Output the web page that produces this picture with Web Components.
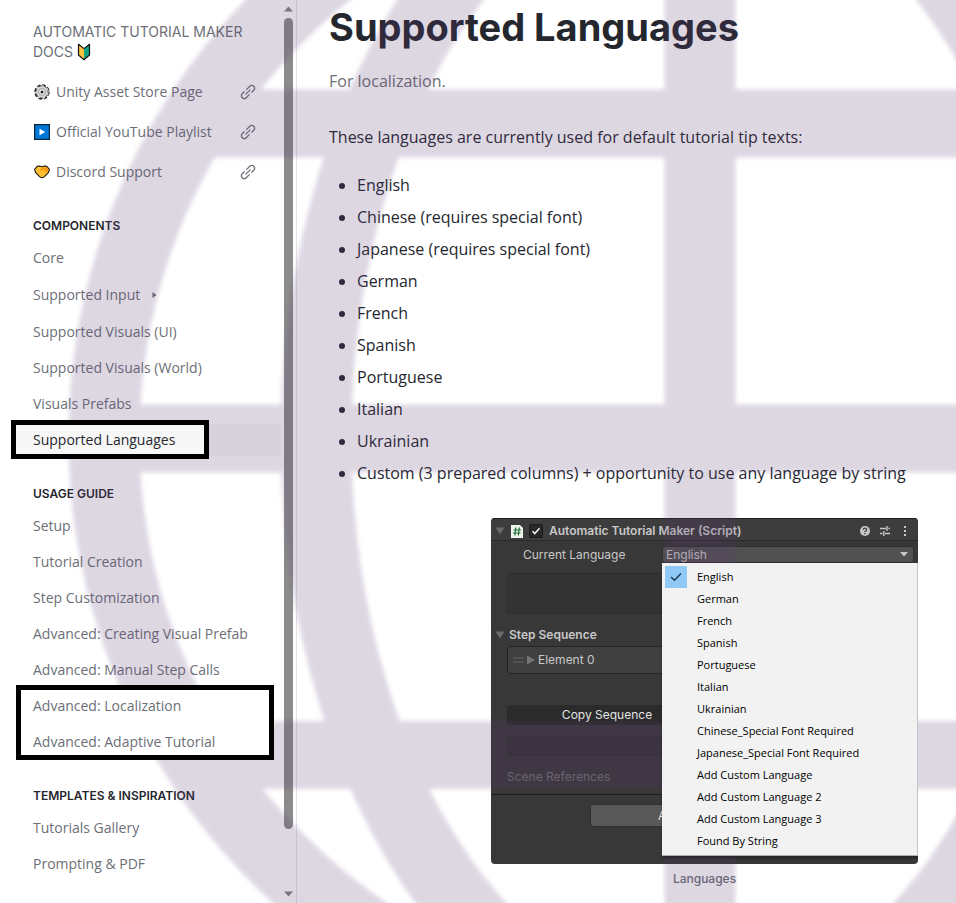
<!DOCTYPE html>
<html lang="en">
<head>
  <meta charset="utf-8">
  <meta name="viewport" content="width=device-width, initial-scale=1">
  <title>Supported Languages</title>
  <style>
    body {
      margin: 0;
      background: #fff;
      color: #25272e;
      font-family: "Open Sans", "Noto Sans", sans-serif;
    }
  </style>
</head>
<body>
  <docs-app>
    <docs-sidebar slot="sidebar">
      <nav-link icon="gear" href="#unity">Unity Asset Store Page</nav-link>
      <nav-link icon="play" href="#youtube">Official YouTube Playlist</nav-link>
      <nav-link icon="hands" href="#discord">Discord Support</nav-link>

      <nav-section heading="COMPONENTS">
        <nav-item>Core</nav-item>
        <nav-item expandable>Supported Input</nav-item>
        <nav-item>Supported Visuals (UI)</nav-item>
        <nav-item>Supported Visuals (World)</nav-item>
        <nav-item>Visuals Prefabs</nav-item>
        <highlight-frame class="current">
          <nav-item active>Supported Languages</nav-item>
        </highlight-frame>
      </nav-section>

      <nav-section heading="USAGE GUIDE">
        <nav-item>Setup</nav-item>
        <nav-item>Tutorial Creation</nav-item>
        <nav-item>Step Customization</nav-item>
        <nav-item>Advanced: Creating Visual Prefab</nav-item>
        <nav-item>Advanced: Manual Step Calls</nav-item>
        <highlight-frame>
          <nav-item>Advanced: Localization</nav-item>
          <nav-item>Advanced: Adaptive Tutorial</nav-item>
        </highlight-frame>
      </nav-section>

      <nav-section heading="TEMPLATES &amp; INSPIRATION">
        <nav-item>Tutorials Gallery</nav-item>
        <nav-item>Prompting &amp; PDF</nav-item>
      </nav-section>
    </docs-sidebar>

    <docs-article heading="Supported Languages" summary="For localization.">
      <p>These languages are currently used for default tutorial tip texts:</p>
      <ul>
        <li>English</li>
        <li>Chinese (requires special font)</li>
        <li>Japanese (requires special font)</li>
        <li>German</li>
        <li>French</li>
        <li>Spanish</li>
        <li>Portuguese</li>
        <li>Italian</li>
        <li>Ukrainian</li>
        <li>Custom (3 prepared columns) + opportunity to use any language by string</li>
      </ul>
      <figure>
        <inspector-panel></inspector-panel>
        <figcaption>Languages</figcaption>
      </figure>
    </docs-article>
  </docs-app>

<script>
const ICONS = {
  gear: `
    <svg width="16" height="16" viewBox="0 0 16 16">
      <circle cx="8" cy="8" r="6.8" fill="none" stroke="#1c1c1c" stroke-width="1.800" stroke-dasharray="3.560 1.780"/>
      <circle cx="8" cy="8" r="6.2" fill="#d6d6d6" stroke="#333" stroke-width=".9"/>
      <circle cx="8" cy="8" r="6" fill="none" stroke="#d6d6d6" stroke-width="1.600" stroke-dasharray="2 3.340" stroke-dashoffset="-.7"/>
      <circle cx="8" cy="8" r="3.400" fill="#f4f4f4" stroke="#999" stroke-width="1"/>
      <circle cx="8" cy="8" r="1.500" fill="#222"/>
    </svg>`,
  play: `
    <svg width="16" height="16" viewBox="0 0 16 16">
      <rect x=".6" y=".6" width="14.8" height="14.8" fill="#0078d7" stroke="#0b2138" stroke-width="1.2"/>
      <path d="M5.500 4.800v6.400L11.300 8z" fill="#fff"/>
    </svg>`,
  hands: `
    <svg width="16" height="16" viewBox="0 0 16 16">
      <path d="M3.200 2.300 5.500 2 8 2.800 10.500 2l2.300.3L15.400 5.300 14.500 8.400 10.500 12.600Q8 14.600 5.500 12.600L1.500 8.400.6 5.300z" fill="#ffbf35" stroke="#1c1608" stroke-width="1.100" stroke-linejoin="round"/>
      <path d="M7.500 3.800 6 6.300l1.500.7 2-1 3.500 2.500 1-2.500-1.500-2.800z" fill="#f59a0c"/>
    </svg>`,
  sprout: `
    <svg width="14" height="18" viewBox="0 0 14 18">
      <path d="M1.500 1.300 7 5.600v11L1.500 12z" fill="#fcc43e"/>
      <path d="M12.500 1.300 7 5.600v11l5.500-4.600z" fill="#10a482"/>
      <path d="M1.500 1.300 7 5.600l5.500-4.300V12L7 16.700 1.500 12z" fill="none" stroke="#111" stroke-width="1.200" stroke-linejoin="round"/>
    </svg>`,
  link: `
    <svg width="16" height="16" viewBox="0 0 16 16" fill="none" stroke="#6c6f77" stroke-width="1.200" stroke-linecap="round">
      <g transform="rotate(-45 8 8)">
        <path d="M7 10.800H2.700a2.800 2.800 0 0 1 0-5.600H5.500"/>
        <path d="M9 5.200h4.300a2.800 2.800 0 0 1 0 5.600H10.500"/>
        <path d="M5 8h6"/>
      </g>
    </svg>`
};

class BaseElement extends HTMLElement {
  constructor() {
    super();
    const tmpl = document.createElement('template');
    tmpl.innerHTML = this.render();
    this.attachShadow({ mode: 'open' }).appendChild(tmpl.content.cloneNode(true));
  }
}

class DocsApp extends BaseElement {
  render() {
    return `
    <style>
      :host {
        display: flex;
        position: relative;
        min-height: 100vh;
        overflow: hidden;
      }
      main { flex: 1; min-width: 0; }
    </style>
    <slot name="sidebar"></slot>
    <main><slot></slot></main>
    <globe-watermark></globe-watermark>`;
  }
}

// Translucent globe that lies over the whole page
class GlobeWatermark extends BaseElement {
  render() {
    return `
    <style>
      :host {
        position: absolute;
        inset: 0;
        z-index: 1;
        pointer-events: none;
      }
      svg { display: block; width: 100%; height: 100%; }
      g { opacity: .2; filter: blur(2px); }
    </style>
    <svg aria-hidden="true">
      <g fill="none" stroke="#5c3c75" stroke-width="71">
        <circle cx="700" cy="438" r="596"/>
        <ellipse cx="700" cy="438" rx="384" ry="596"/>
        <path d="M700-158V1034"/>
        <path d="M104 438.500H1296M194 123.500H1206M194 755H1206" stroke-width="68"/>
      </g>
    </svg>`;
  }
}

class DocsSidebar extends BaseElement {
  render() {
    return `
    <style>
      :host {
        display: flex;
        flex: none;
        box-sizing: border-box;
        width: 297px;
        height: 100vh;
        border-right: 1px solid #e3e3e6;
      }
      nav {
        flex: 1;
        display: flex;
        flex-direction: column;
        gap: 30px;
        padding: 22px 0 0 21px;
        box-sizing: border-box;
      }
      .title {
        margin: 0 12px -16px;
        font: 14px/20px Inter, sans-serif;
        color: #6c6f77;
      }
      .title svg { vertical-align: -4px; }
      ::slotted(nav-link:not(:last-of-type)) { margin-bottom: -22px; }
    </style>
    <nav>
      <div class="title">AUTOMATIC TUTORIAL MAKER DOCS ${ICONS.sprout}</div>
      <slot></slot>
    </nav>
    <docs-scrollbar></docs-scrollbar>`;
  }
}

class DocsScrollbar extends BaseElement {
  render() {
    return `
    <style>
      :host {
        display: flex;
        flex-direction: column;
        align-items: center;
        width: 15px;
        gap: 6px;
        padding: 6px 0;
        box-sizing: border-box;
      }
      svg { display: block; flex: none; }
      .track { flex: 1; }
      .thumb {
        width: 9px;
        height: 93.5%;
        border-radius: 5px;
        background: #8b8b8b;
      }
    </style>
    <svg width="9" height="6" viewBox="0 0 9 6"><path d="M0 5.500 4.500.5 9 5.500z" fill="#858585"/></svg>
    <div class="track"><div class="thumb"></div></div>
    <svg width="9" height="6" viewBox="0 0 9 6"><path d="M0 .5 4.500 5.500 9 .5z" fill="#858585"/></svg>`;
  }
}

class NavLink extends BaseElement {
  render() {
    return `
    <style>
      :host { display: block; }
      a {
        display: flex;
        align-items: center;
        gap: 6px;
        height: 32px;
        padding: 0 25px 0 13px;
        font-size: 14px;
        line-height: 20px;
        color: #6c6f77;
        text-decoration: none;
      }
      .text { flex: 1; white-space: nowrap; }
      svg { display: block; flex: none; }
    </style>
    <a href="${this.getAttribute('href')}">
      ${ICONS[this.getAttribute('icon')]}
      <span class="text"><slot></slot></span>
      ${ICONS.link}
    </a>`;
  }
}

class NavSection extends BaseElement {
  render() {
    return `
    <style>
      :host { display: block; }
      h2 {
        margin: 0 12px 8px;
        font: 600 12px/16px Inter, sans-serif;
      }
      .items {
        display: flex;
        flex-direction: column;
        gap: 4px;
      }
    </style>
    <h2>${this.getAttribute('heading')}</h2>
    <div class="items"><slot></slot></div>`;
  }
}

class NavItem extends BaseElement {
  render() {
    const arrow = this.hasAttribute('expandable')
      ? '<svg width="5" height="8" viewBox="0 0 5 8"><path d="M.5 1 4.500 4 .5 7z" fill="#6c6f77"/></svg>'
      : '';
    return `
    <style>
      :host { display: block; }
      :host([active]) { background: #f7f7f7; }
      a {
        display: flex;
        align-items: center;
        gap: 12px;
        position: relative;
        z-index: var(--item-layer, auto);
        height: 32px;
        padding: 0 12px;
        font-size: 14px;
        line-height: 20px;
        white-space: nowrap;
        color: #6c6f77;
        text-decoration: none;
      }
      :host([active]) a { color: #25272e; }
      :host([expandable]) a { height: 34px; }
    </style>
    <a href="#"><slot></slot>${arrow}</a>`;
  }
}

// Thick black frame around one or more nav items
class HighlightFrame extends BaseElement {
  render() {
    return `
    <style>
      :host {
        --item-layer: 3;
        display: flex;
        flex-direction: column;
        gap: 4px;
        position: relative;
      }
      .frame {
        position: absolute;
        z-index: 2;
        inset: -5px 7px -2px -5px;
        border: 5px solid #000;
        background: #fff;
      }
      :host(.current) .frame {
        inset: -4px 72px -3px -10px;
        background: #f7f7f7;
      }
    </style>
    <div class="frame"></div>
    <slot></slot>`;
  }
}

class DocsArticle extends BaseElement {
  render() {
    return `
    <style>
      :host {
        display: flex;
        flex-direction: column;
        padding: 3px 38px 16px 32px;
        font-size: 16px;
        line-height: 24px;
      }
      h1 {
        margin: 0 0 18px;
        font: 700 38px/48px Inter, sans-serif;
      }
      .summary { margin: 0 0 32px; color: #6c6f77; }
      ::slotted(p) { margin: 0 0 24px; }
      ::slotted(ul) {
        display: flex;
        flex-direction: column;
        gap: 8px;
        margin: 0 0 33px;
        padding-left: 28px;
      }
      ::slotted(figure) {
        align-self: flex-end;
        width: 427px;
        max-width: 100%;
        margin: 0;
        font: 500 12px/16px Inter, sans-serif;
        text-align: center;
        color: #6c6f77;
      }
    </style>
    <h1>${this.getAttribute('heading')}</h1>
    <p class="summary">${this.getAttribute('summary')}</p>
    <slot></slot>`;
  }
}

class InspectorPanel extends BaseElement {
  render() {
    return `
    <style>
      :host {
        display: block;
        margin-bottom: 7px;
        border-radius: 4px;
        overflow: hidden;
        background: #383838;
        color: #c8c8c8;
        font: 12px/16px Inter, sans-serif;
        text-align: left;
      }
      svg { display: block; flex: none; }
      header {
        display: flex;
        align-items: center;
        gap: 5px;
        height: 23px;
        box-sizing: border-box;
        padding: 2px 7px 0 4px;
        border-top: 1px solid #1e1e1e;
        border-bottom: 1px solid #2a2a2a;
        background: #3d3d3d;
      }
      header label {
        display: flex;
        align-items: center;
        flex: 1;
        gap: 6px;
        font-weight: 600;
      }
      input {
        appearance: none;
        width: 14px;
        height: 14px;
        margin: 0;
        border: 1px solid #1b1b1b;
        border-radius: 2px;
        background: #282828 url("data:image/svg+xml,%3Csvg xmlns='http://www.w3.org/2000/svg' viewBox='0 0 12 12'%3E%3Cpath d='M2.500 6.200 4.800 8.500 9.500 3.200' fill='none' stroke='%23eee' stroke-width='1.600'/%3E%3C/svg%3E");
      }
      .tools { display: flex; gap: 8px; }
      .field {
        display: flex;
        align-items: center;
        height: 27px;
        padding: 0 4px 0 32px;
      }
      .field label { flex: 0 0 139px; }
      .picker { flex: 1; position: relative; }
      select {
        appearance: none;
        display: block;
        width: 100%;
        height: 17px;
        padding: 0 3px;
        border: 1px solid #303030;
        border-radius: 3px;
        background: #515151 url("data:image/svg+xml,%3Csvg xmlns='http://www.w3.org/2000/svg' viewBox='0 0 8 5'%3E%3Cpath d='M0 0h8L4 4.500z' fill='%23c8c8c8'/%3E%3C/svg%3E") no-repeat right 5px center / 8px 5px;
        color: #c8c8c8;
        font: inherit;
        line-height: 15px;
      }
      .body { padding: 0 16px; }
      .box {
        box-sizing: border-box;
        border: 1px solid #2e2e2e;
        border-radius: 3px;
        background: #333;
      }
      .tall { height: 41px; margin-top: 5px; }
      h3 {
        display: flex;
        align-items: center;
        gap: 4px;
        margin: 13px 0 3px -12px;
        font: 600 12px/16px Inter, sans-serif;
      }
      .element {
        display: flex;
        align-items: center;
        gap: 3px;
        height: 28px;
        padding: 0 5px;
        border-color: #242424;
        background: #404040;
      }
      button {
        display: block;
        padding: 0;
        border: 0;
        border-radius: 3px;
        color: #e4e4e4;
        font: inherit;
      }
      .copy { width: 200px; height: 20px; margin-top: 31px; background: #2b2b2b; }
      .short { height: 20px; margin-top: 11px; }
      .muted { margin: 13px 0 9px; color: #6e6e6e; }
      footer {
        height: 70px;
        box-sizing: border-box;
        padding-top: 9px;
        border-top: 1px solid #1e1e1e;
      }
      .add {
        width: 229px;
        height: 23px;
        margin: 0 auto;
        padding-left: 67px;
        border: 1px solid #303030;
        background: #585858;
        text-align: left;
      }
    </style>
    <header>
      <svg width="10" height="8" viewBox="0 0 10 8"><path d="M.5.500h9L5 7.500z" fill="#6a6a6a"/></svg>
      <svg width="14" height="14" viewBox="0 0 14 14">
        <path d="M1 1h9l3 3v10H1z" fill="#eef3ee"/>
        <path d="M5.800 3.500 4.800 11.500M9.300 3.500 8.300 11.500M3.500 6h7.500M3 9h7.500" stroke="#1e6b32" stroke-width="1.200"/>
      </svg>
      <label><input type="checkbox" checked>Automatic Tutorial Maker (Script)</label>
      <div class="tools">
        <svg width="12" height="12" viewBox="0 0 12 12">
          <circle cx="6" cy="6" r="5" fill="#c8c8c8"/>
          <path d="M4.300 4.800Q4.400 3.200 6 3.200T7.700 4.700Q7.700 5.500 6 6.500V7" fill="none" stroke="#3d3d3d" stroke-width="1.300"/>
          <path d="M5.300 8h1.400v1.300H5.300z" fill="#3d3d3d"/>
        </svg>
        <svg width="12" height="12" viewBox="0 0 12 12" stroke="#c8c8c8" stroke-width="1.400">
          <path d="M1 3.500h6M9.500 3.500H11M8 1v5M1 8.500h2.500M6 8.500h5M4.800 6v5"/>
        </svg>
        <svg width="12" height="12" viewBox="0 0 12 12" fill="#c8c8c8">
          <path d="M5 1h2v2H5zM5 5h2v2H5zM5 9h2v2H5z"/>
        </svg>
      </div>
    </header>
    <div class="field">
      <label for="language">Current Language</label>
      <div class="picker">
        <select id="language"><option>English</option></select>
        <language-menu></language-menu>
      </div>
    </div>
    <div class="body">
      <div class="box tall"></div>
      <h3>
        <svg width="10" height="8" viewBox="0 0 10 8"><path d="M.5.500h9L5 7.500z" fill="#6a6a6a"/></svg>
        Step Sequence
      </h3>
      <div class="box element">
        <svg width="11" height="8" viewBox="0 0 11 8"><path d="M0 2h11M0 6h11" stroke="#666"/></svg>
        <svg width="8" height="10" viewBox="0 0 8 10"><path d="M0 .500v9L8 5z" fill="#777"/></svg>
        <span>Element 0</span>
      </div>
      <button class="copy" type="button">Copy Sequence</button>
      <div class="box short"></div>
      <p class="muted">Scene References</p>
    </div>
    <footer><button class="add" type="button">A</button></footer>`;
  }
}

class LanguageMenu extends BaseElement {
  render() {
    const languages = [
      'English', 'German', 'French', 'Spanish', 'Portuguese', 'Italian', 'Ukrainian',
      'Chinese_Special Font Required', 'Japanese_Special Font Required',
      'Add Custom Language', 'Add Custom Language 2', 'Add Custom Language 3', 'Found By String'
    ];
    const items = languages.map((name, i) => `
      <li role="option" aria-selected="${i === 0}">
        <span class="mark"><svg width="12" height="10" viewBox="0 0 12 10"><path d="M1 5 4.500 8.300 11 1.500" fill="none" stroke="#1f3a52" stroke-width="1.500"/></svg></span>
        ${name}
      </li>`).join('');
    return `
    <style>
      :host {
        position: absolute;
        z-index: 2;
        top: 100%;
        left: 0;
        right: -4px;
      }
      ul {
        margin: 0;
        padding: 3px;
        list-style: none;
        border-right: 1px solid #c4c4c4;
        border-bottom: 1px solid #b0b0b0;
        background: #f2f2f2;
        box-shadow: 1px 2px 3px rgba(0, 0, 0, .4);
      }
      li {
        display: flex;
        align-items: center;
        gap: 10px;
        height: 22px;
        font: 11px/16px "Open Sans", "Noto Sans", sans-serif;
        color: #000;
      }
      .mark {
        display: flex;
        align-items: center;
        justify-content: center;
        width: 22px;
        height: 22px;
        visibility: hidden;
      }
      li[aria-selected="true"] .mark { visibility: visible; background: #90c8f6; }
    </style>
    <ul role="listbox" aria-label="Current Language">${items}</ul>`;
  }
}

customElements.define('globe-watermark', GlobeWatermark);
customElements.define('docs-scrollbar', DocsScrollbar);
customElements.define('nav-link', NavLink);
customElements.define('nav-item', NavItem);
customElements.define('highlight-frame', HighlightFrame);
customElements.define('nav-section', NavSection);
customElements.define('docs-sidebar', DocsSidebar);
customElements.define('language-menu', LanguageMenu);
customElements.define('inspector-panel', InspectorPanel);
customElements.define('docs-article', DocsArticle);
customElements.define('docs-app', DocsApp);
</script>
</body>
</html>
